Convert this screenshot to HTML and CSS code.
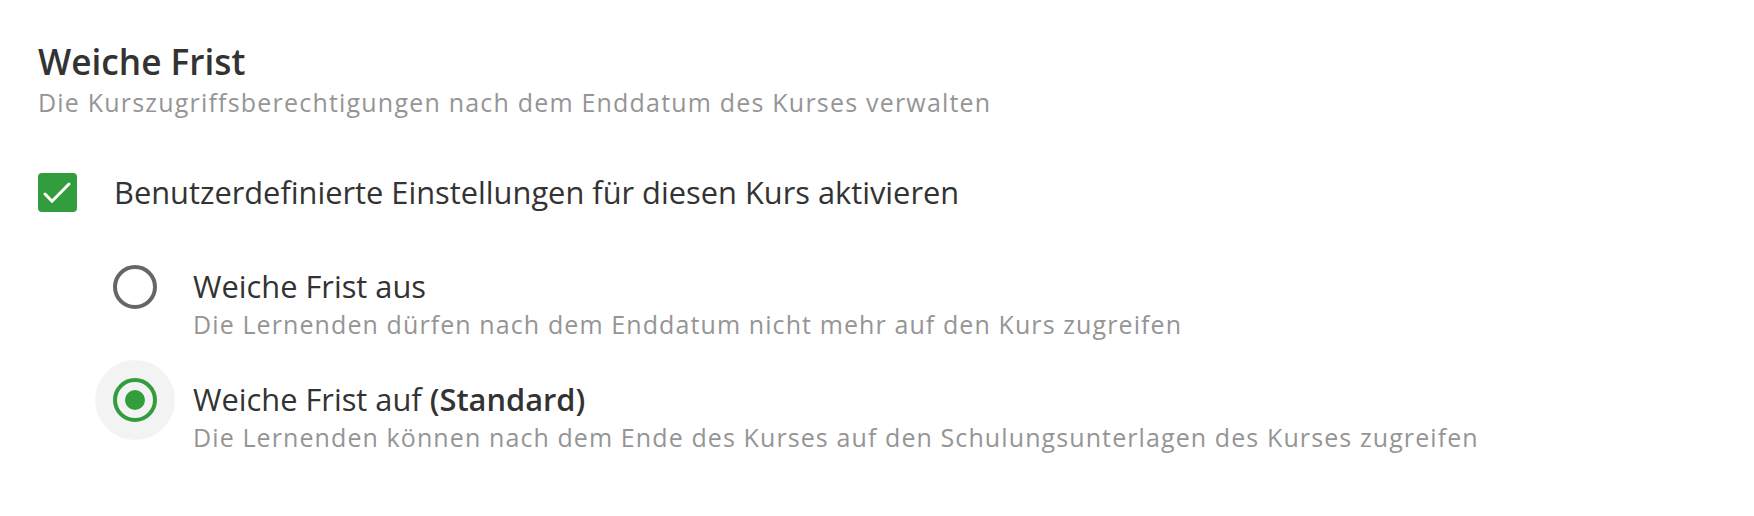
FILE: index.html
```html
<!DOCTYPE html>
<html lang="de">
<head>
    <meta charset="UTF-8">
    <meta name="viewport" content="width=device-width, initial-scale=1.0">
    <title>Weiche Frist</title>
    <link rel="stylesheet" href="styles.css">
</head>
<body>
    <section class="setting">
        <h2 class="setting-title">Weiche Frist</h2>
        <p class="setting-desc">Die Kurszugriffsberechtigungen nach dem Enddatum des Kurses verwalten</p>

        <label class="check-row">
            <span class="checkbox">
                <svg viewBox="0 0 39 39" width="39" height="39" aria-hidden="true">
                    <path d="M7 21 L14 28.3 L31 11" fill="none" stroke="#fff" stroke-width="3" stroke-linecap="round" stroke-linejoin="round"/>
                </svg>
            </span>
            <span class="check-label">Benutzerdefinierte Einstellungen für diesen Kurs aktivieren</span>
        </label>

        <div class="options">
            <label class="option">
                <span class="radio-wrap"><span class="radio"></span></span>
                <span class="option-text">
                    <span class="option-title">Weiche Frist aus</span>
                    <span class="option-desc">Die Lernenden dürfen nach dem Enddatum nicht mehr auf den Kurs zugreifen</span>
                </span>
            </label>

            <label class="option selected">
                <span class="radio-wrap"><span class="radio"></span></span>
                <span class="option-text">
                    <span class="option-title">Weiche Frist auf <strong>(Standard)</strong></span>
                    <span class="option-desc">Die Lernenden können nach dem Ende des Kurses auf den Schulungsunterlagen des Kurses zugreifen</span>
                </span>
            </label>
        </div>
    </section>
</body>
</html>
```

FILE: styles.css
```css
/* === BASE === */
body {
    margin: 0;
    padding: 41px 38px 0;
    font-family: 'Open Sans', 'Noto Sans', sans-serif;
    background-color: #fff;
    color: #333;
}

/* === SECTION HEADER === */
.setting-title {
    margin: 0;
    font-size: 35.2px;
    line-height: 40px;
    font-weight: 600;
    color: #333;
}

.setting-desc {
    margin: 5px 0 0;
    font-size: 25px;
    line-height: 32px;
    letter-spacing: 1.2px;
    color: #959595;
}

/* === CHECKBOX === */
.check-row {
    display: flex;
    align-items: center;
    gap: 37px;
    margin-top: 54px;
    height: 40px;
}

.checkbox {
    width: 39px;
    height: 39px;
    border-radius: 4px;
    background-color: #329d3c;
    display: flex;
}

.check-label {
    font-size: 30.8px;
    line-height: 40px;
}

/* === RADIO OPTIONS === */
.options {
    display: flex;
    flex-direction: column;
    gap: 18px;
    margin-top: 35px;
    padding-left: 57px;
}

.option {
    display: flex;
    align-items: flex-start;
    gap: 18px;
}

.radio-wrap {
    width: 80px;
    height: 80px;
    border-radius: 50%;
    display: flex;
    align-items: center;
    justify-content: center;
    flex-shrink: 0;
}

.radio {
    box-sizing: border-box;
    width: 44px;
    height: 44px;
    border-radius: 50%;
    border: 4px solid #666;
    display: flex;
    align-items: center;
    justify-content: center;
}

.option.selected .radio-wrap {
    background-color: #f3f3f3;
}

.option.selected .radio {
    border: 4.5px solid #329d3c;
}

.option.selected .radio::after {
    content: "";
    width: 20px;
    height: 20px;
    border-radius: 50%;
    background-color: #329d3c;
}

.option-text {
    display: flex;
    flex-direction: column;
    padding-top: 18px;
}

.option-title {
    font-size: 30.8px;
    line-height: 42px;
}

.option-title strong {
    font-weight: 600;
}

.option-desc {
    font-size: 25px;
    line-height: 35px;
    letter-spacing: 1.1px;
    color: #959595;
}
```
